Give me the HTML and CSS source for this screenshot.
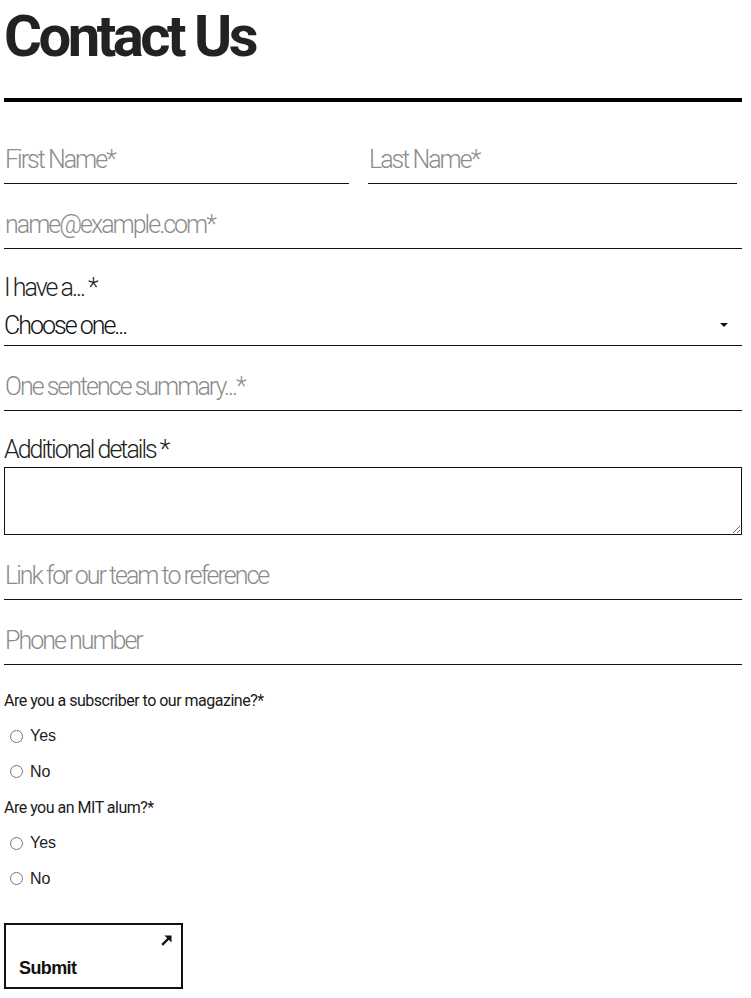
FILE: index.html
```html
<!DOCTYPE html>
<html lang="en">
<head>
<meta charset="utf-8">
<title>Contact Us</title>
<link rel="stylesheet" href="styles.css">
</head>
<body>
<main class="page">
  <h1 class="title">Contact Us</h1>
  <hr class="rule">
  <form class="form">
    <div class="row-names">
      <input class="text-input" type="text" placeholder="First Name*">
      <input class="text-input" type="text" placeholder="Last Name*">
    </div>
    <input class="text-input field" type="email" placeholder="name@example.com*">
    <div class="select-block">
      <label class="big-label">I have a... *</label>
      <div class="select-wrap">
        <span class="select-text">Choose one...</span>
        <span class="caret"></span>
      </div>
    </div>
    <input class="text-input field" type="text" placeholder="One sentence summary...*">
    <label class="big-label details-label">Additional details *</label>
    <textarea class="details"></textarea>
    <input class="text-input field" type="text" placeholder="Link for our team to reference">
    <input class="text-input field" type="text" placeholder="Phone number">

    <div class="question q-first" role="radiogroup">
      <div class="q-text">Are you a subscriber to our magazine?*</div>
      <label class="radio-row"><input class="radio" type="radio" name="sub"><span>Yes</span></label>
      <label class="radio-row short"><input class="radio" type="radio" name="sub"><span>No</span></label>
    </div>
    <div class="question" role="radiogroup">
      <div class="q-text">Are you an MIT alum?*</div>
      <label class="radio-row"><input class="radio" type="radio" name="alum"><span>Yes</span></label>
      <label class="radio-row short"><input class="radio" type="radio" name="alum"><span>No</span></label>
    </div>

    <button class="submit" type="button">
      <svg class="arrow" width="11" height="11" viewBox="0 0 11 11" aria-hidden="true">
        <path d="M3.5 0.5 H10.5 V7.5 Z" fill="#111"/>
        <path d="M8.5 2.5 L1.2 9.8" stroke="#111" stroke-width="2.4" fill="none"/>
      </svg>
      <span class="submit-text">Submit</span>
    </button>
  </form>
</main>
</body>
</html>
```

FILE: styles.css
```css
* { box-sizing: border-box; }
html, body { margin: 0; padding: 0; background: #fff; }
body { font-family: Roboto, "Liberation Sans", sans-serif; color: #1e1e1e; }

.page { width: 742px; padding-left: 4px; }

.title {
  margin: 0;
  padding-top: 4px;
  font-family: Roboto, "Liberation Sans", sans-serif;
  font-weight: 700;
  font-size: 58px;
  line-height: 64px;
  letter-spacing: -3.5px;
  color: #222;
}

.rule {
  margin: 30px 0 0 0;
  border: 0;
  height: 4px;
  background: #000;
}

.form { display: flex; flex-direction: column; }

.row-names {
  display: grid;
  grid-template-columns: 345px 369px;
  column-gap: 19px;
  margin-top: 33px;
}

.text-input {
  display: block;
  width: 100%;
  height: 49px;
  border: 0;
  border-bottom: 1px solid #111;
  padding: 0 0 0 1px;
  background: transparent;
  font-family: Roboto, sans-serif;
  font-weight: 300;
  font-size: 25px;
  letter-spacing: -2px;
  color: #222;
  outline: none;
}
.text-input::placeholder { color: #8c8c8c; }

.field { margin-top: 16px; }

.select-block { margin-top: 25px; }

.big-label {
  display: block;
  font-family: Roboto, sans-serif;
  font-weight: 300;
  font-size: 25px;
  line-height: 28px;
  letter-spacing: -2px;
  color: #1e1e1e;
}

.select-wrap {
  display: flex;
  align-items: flex-start;
  justify-content: space-between;
  height: 44px;
  padding-top: 9px;
  border-bottom: 1px solid #111;
}
.select-text {
  font-family: Roboto, sans-serif;
  font-weight: 300;
  font-size: 25px;
  line-height: 30px;
  letter-spacing: -2px;
  color: #111;
}
.caret {
  width: 0; height: 0;
  margin-top: 12px;
  margin-right: 14px;
  border-left: 4px solid transparent;
  border-right: 4px solid transparent;
  border-top: 4px solid #111;
}

.details-label { margin-top: 25px; }

.details {
  display: block;
  width: 738px;
  height: 68px;
  margin-top: 3px;
  border: 1px solid #111;
  resize: vertical;
}

.q-first { margin-top: 17px; }
.q-text {
  height: 36px;
  display: flex;
  align-items: center;
  font-family: Roboto, sans-serif;
  font-size: 16px;
  letter-spacing: -0.5px;
  color: #1a1a1a;
}

.radio-row {
  display: flex;
  align-items: center;
  height: 36px;
  font-family: "Liberation Sans", Arial, sans-serif;
  font-size: 16px;
  color: #222;
}
.radio-row.short { height: 35px; }
.radio {
  width: 13px;
  height: 13px;
  margin: 0 7px 0 6px;
  accent-color: #777;
}

.submit {
  position: relative;
  align-self: flex-start;
  width: 179px;
  height: 66px;
  margin-top: 27px;
  border: 2px solid #111;
  background: #fff;
  padding: 0 0 8px 13px;
  display: flex;
  align-items: flex-end;
  cursor: pointer;
}
.submit-text {
  font-family: "Liberation Sans", Arial, sans-serif;
  font-weight: 700;
  font-size: 18px;
  letter-spacing: -0.6px;
  color: #111;
}
.arrow {
  position: absolute;
  top: 10px;
  right: 9px;
}
```
